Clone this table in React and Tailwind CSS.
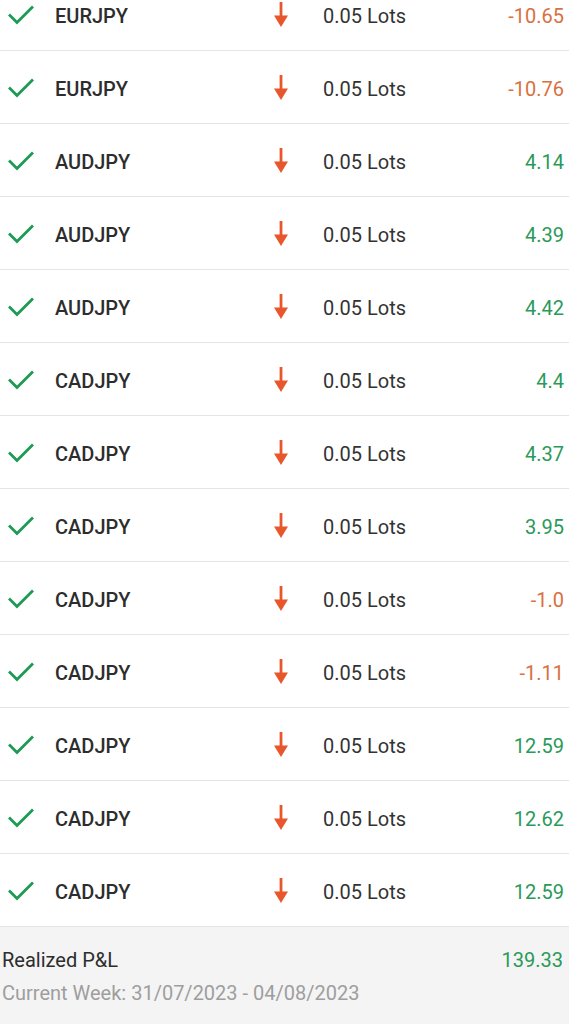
import React from "react";

const rows = [
  ["EURJPY", "-10.65"],
  ["EURJPY", "-10.76"],
  ["AUDJPY", "4.14"],
  ["AUDJPY", "4.39"],
  ["AUDJPY", "4.42"],
  ["CADJPY", "4.4"],
  ["CADJPY", "4.37"],
  ["CADJPY", "3.95"],
  ["CADJPY", "-1.0"],
  ["CADJPY", "-1.11"],
  ["CADJPY", "12.59"],
  ["CADJPY", "12.62"],
  ["CADJPY", "12.59"],
];

function Check() {
  return (
    <svg width="26" height="20" viewBox="0 0 26 20" fill="none">
      <path d="M2 10.5 L9 17.5 L24 2.5" stroke="#1f9a55" strokeWidth="2.8" strokeLinecap="square" />
    </svg>
  );
}

function Arrow() {
  return (
    <svg width="16" height="27" viewBox="0 0 16 27">
      <rect x="6.6" y="1" width="2.8" height="15" fill="#e8572b" />
      <path d="M1 14.5 L15 14.5 L8 26 Z" fill="#e8572b" />
    </svg>
  );
}

export default function App() {
  return (
    <div className="w-[569px] h-[1024px] overflow-hidden bg-white" style={{ fontFamily: "Roboto, 'Liberation Sans', sans-serif" }}>
      <div className="-mt-[22px]">
        {rows.map(([sym, val], i) => {
          const neg = val.startsWith("-");
          return (
            <div key={i} className="h-[73px] flex items-center border-b border-[#e4e4e4]">
              <div className="w-[55px] pl-[8px] pt-[1px] flex items-center">
                <Check />
              </div>
              <div className="w-[218px] pt-[3px] text-[20px] leading-[24px] font-medium text-[#2d2d2d]">{sym}</div>
              <div className="w-[50px] pt-[1px] flex items-center">
                <Arrow />
              </div>
              <div className="flex-1 pt-[3px] text-[20px] leading-[24px] text-[#333333]">0.05 Lots</div>
              <div className={`pr-[5px] pt-[3px] text-[20px] leading-[24px] ${neg ? "text-[#d9703f]" : "text-[#2a9a5a]"}`}>{val}</div>
            </div>
          );
        })}
      </div>
      <div className="bg-[#f4f4f4] h-[100px] px-[2px] pt-[21px]">
        <div className="flex justify-between items-center text-[20px] leading-[24px]">
          <span className="text-[#2d2d2d]">Realized P&amp;L</span>
          <span className="text-[#2a9a5a] pr-[4px]">139.33</span>
        </div>
        <div className="mt-[9px] text-[20px] leading-[24px] text-[#9e9e9e]">Current Week: 31/07/2023 - 04/08/2023</div>
      </div>
    </div>
  );
}
